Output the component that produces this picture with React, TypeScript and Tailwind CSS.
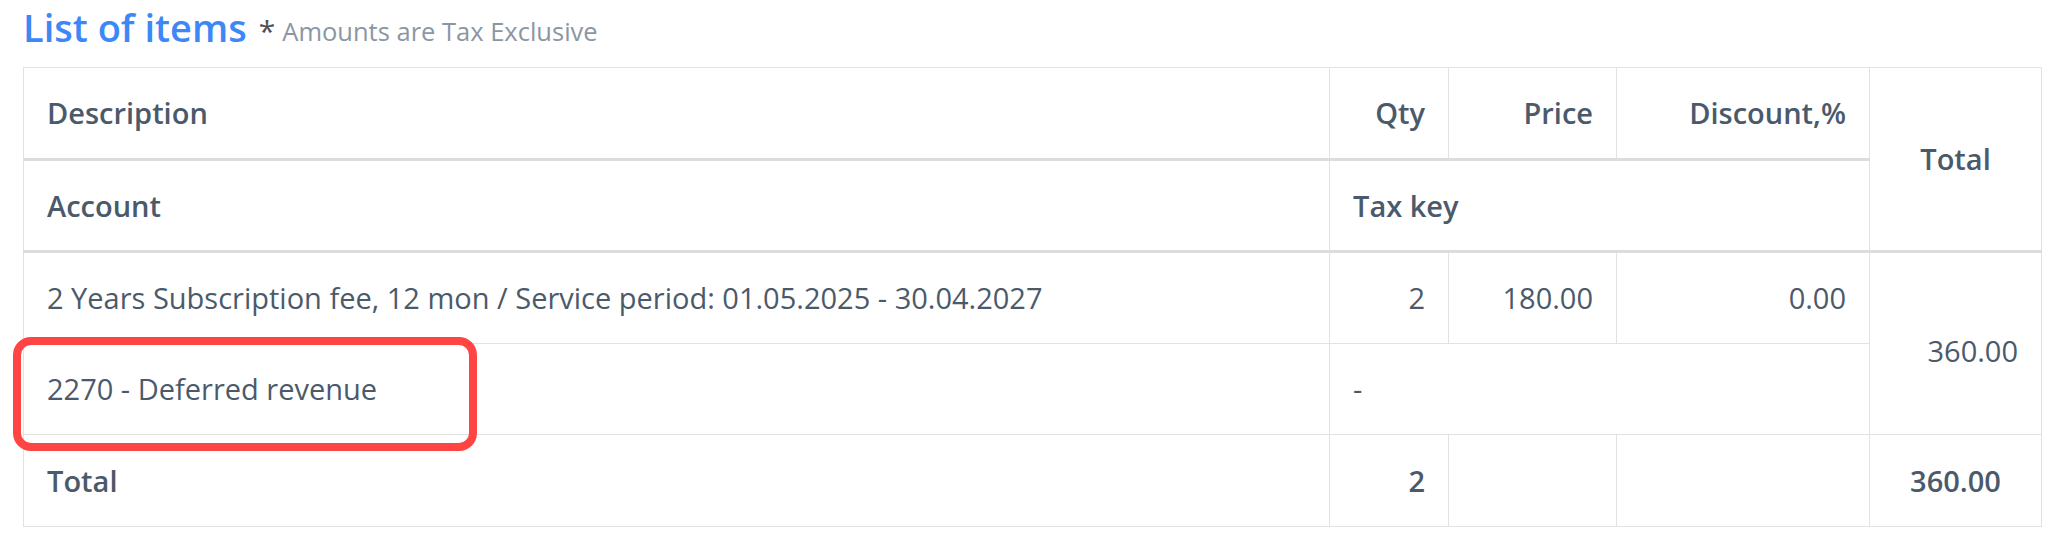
import React from "react";

const cell = "border border-[#e2e2e2] px-[23px] align-middle";

export default function App() {
  return (
    <div className="bg-white w-[2050px] h-[546px] font-['Open_Sans',sans-serif] text-[#4b5a6b]">
      <div className="pl-[23px] pr-[9px]">
        <div className="h-[67px] flex items-start pt-[1px]">
          <span className="text-[38px] leading-[52px] font-semibold text-[#3d87f7]">List of items</span>
          <span className="ml-[12px] text-[30px] leading-[60px] text-[#4a4f57]">*</span>
          <span className="ml-[7px] text-[25.5px] leading-[61px] text-[#8b96a3]">Amounts are Tax Exclusive</span>
        </div>
        <div className="relative">
          <table className="w-[2018px] border-collapse text-[29px] leading-[40px] table-fixed">
            <colgroup>
              <col className="w-[1306px]" />
              <col className="w-[119px]" />
              <col className="w-[168px]" />
              <col className="w-[253px]" />
              <col className="w-[172px]" />
            </colgroup>
            <thead className="font-semibold">
              <tr className="h-[92px]">
                <th className={`${cell} text-left border-b-[3px] border-b-[#dcdcdc] font-semibold`}>Description</th>
                <th className={`${cell} text-right border-b-[3px] border-b-[#dcdcdc] font-semibold`}>Qty</th>
                <th className={`${cell} text-right border-b-[3px] border-b-[#dcdcdc] font-semibold`}>Price</th>
                <th className={`${cell} text-right border-b-[3px] border-b-[#dcdcdc] font-semibold`}>Discount,%</th>
                <th rowSpan={2} className={`${cell} text-center border-b-[3px] border-b-[#dcdcdc] font-semibold`}>Total</th>
              </tr>
              <tr className="h-[92px]">
                <th className={`${cell} text-left border-b-[3px] border-b-[#dcdcdc] font-semibold`}>Account</th>
                <th colSpan={3} className={`${cell} text-left border-b-[3px] border-b-[#dcdcdc] font-semibold`}>Tax key</th>
              </tr>
            </thead>
            <tbody>
              <tr className="h-[92px]">
                <td className={`${cell} text-left`}>2 Years Subscription fee, 12 mon / Service period: 01.05.2025 - 30.04.2027</td>
                <td className={`${cell} text-right`}>2</td>
                <td className={`${cell} text-right`}>180.00</td>
                <td className={`${cell} text-right`}>0.00</td>
                <td rowSpan={2} className={`${cell} text-right pt-[14px]`}>360.00</td>
              </tr>
              <tr className="h-[91px]">
                <td className={`${cell} text-left`}>2270 - Deferred revenue</td>
                <td colSpan={3} className={`${cell} text-left`}>-</td>
              </tr>
              <tr className="h-[92px] font-semibold">
                <td className={`${cell} text-left`}>Total</td>
                <td className={`${cell} text-right`}>2</td>
                <td className={cell}></td>
                <td className={cell}></td>
                <td className={`${cell} text-center`}>360.00</td>
              </tr>
            </tbody>
          </table>
          <div className="absolute left-[-10px] top-[270px] w-[464px] h-[114px] border-[8px] border-[#ff4444] rounded-[18px] pointer-events-none" />
        </div>
      </div>
    </div>
  );
}
